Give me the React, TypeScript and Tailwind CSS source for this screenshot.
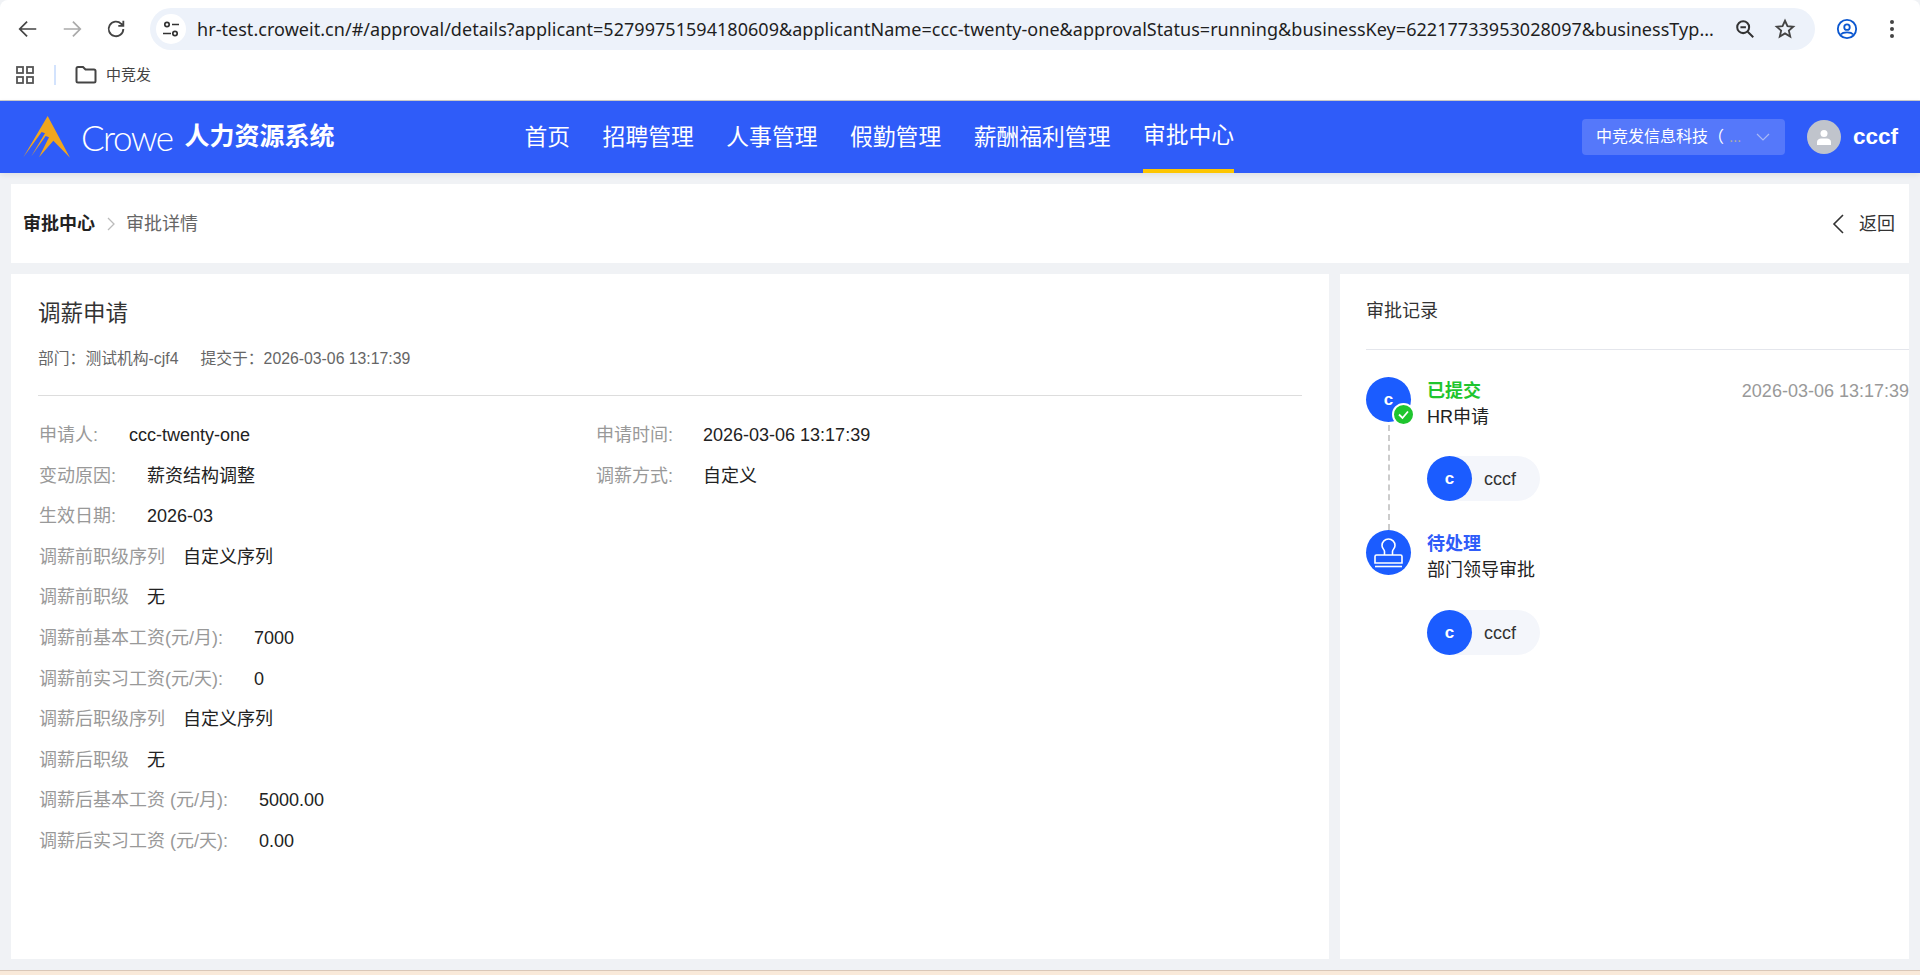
import React from "react";

const FONT = "font-['Liberation_Sans','Noto_Sans_CJK_SC',sans-serif]";

function Logo() {
  return (
    <svg width="70" height="55" viewBox="0 0 210 165" className="shrink-0">
      <path d="M98 18 L165 143 L115 92 L72 142 L102 82 L92 78 L48 140 L90 70 L80 66 L25 142 Z" fill="#f0a61e" />
    </svg>
  );
}

function Row({ label, value, gap = 18 }: { label: string; value: string; gap?: number }) {
  return (
    <div className="flex h-[40.55px] items-center text-lg">
      <span className="text-[#999]">{label}</span>
      <span className="text-[#222]" style={{ marginLeft: gap }}>{value}</span>
    </div>
  );
}

function Person() {
  return (
    <div className="flex h-[45px] w-[113px] items-center rounded-full bg-[#f4f6fb]">
      <div className="flex h-[45px] w-[45px] items-center justify-center rounded-full bg-[#1b5cff] text-[17px] font-bold text-white">c</div>
      <span className="ml-3 text-lg text-[#333]">cccf</span>
    </div>
  );
}

export default function App() {
  return (
    <div className={`${FONT} flex h-[975px] flex-col overflow-hidden bg-[#f0f2f5]`}>
      <div className="flex h-[50px] shrink-0 items-center rounded-t-lg bg-white pt-[8px]">
        <div className="flex w-[150px] shrink-0 items-center gap-[22px] pl-[17px]">
          <svg width="22" height="22" viewBox="0 0 24 24" fill="none" stroke="#444" strokeWidth="1.900"><path d="M21 12H4M11 4l-8 8 8 8" /></svg>
          <svg width="22" height="22" viewBox="0 0 24 24" fill="none" stroke="#aaa" strokeWidth="1.900"><path d="M3 12h17M13 4l8 8-8 8" /></svg>
          <svg width="22" height="22" viewBox="0 0 24 24" fill="none" stroke="#444" strokeWidth="2"><path d="M20 12a8 8 0 1 1-2.300-5.700L20 8.500M20 3v5.500h-5.500" /></svg>
        </div>
        <div className="flex h-[42px] w-[1665px] items-center rounded-full bg-[#edf2fa] pl-[6px] pr-[19px]">
          <div className="flex h-[30px] w-[30px] shrink-0 items-center justify-center rounded-full bg-white">
            <svg width="20" height="20" viewBox="0 0 20 20" fill="none" stroke="#333" strokeWidth="1.700"><circle cx="6" cy="5.500" r="2.200" /><path d="M11 5.500h7M2 14.500h8" /><circle cx="14" cy="14.500" r="2.200" /></svg>
          </div>
          <div className="ml-[11px] whitespace-nowrap text-lg tracking-[0.04px] text-[#1f1f1f] font-['Noto_Sans','Noto_Sans_CJK_SC',sans-serif]">hr-test.croweit.cn/#/approval/details?applicant=52799751594180609&amp;applicantName=ccc-twenty-one&amp;approvalStatus=running&amp;businessKey=62217733953028097&amp;businessTyp...</div>
          <div className="ml-auto flex items-center gap-[18px]">
            <svg width="22" height="22" viewBox="0 0 24 24" fill="none" stroke="#333" strokeWidth="2.200"><circle cx="10" cy="10" r="6.500" /><path d="M7 10h6M15 15l6 6" /></svg>
            <svg width="22" height="22" viewBox="0 0 24 24" fill="none" stroke="#444" strokeWidth="2"><path d="M12 3l2.700 6 6.300.6-4.800 4.200 1.500 6.400L12 16.800l-5.700 3.400 1.500-6.400L3 9.600 9.300 9z" /></svg>
          </div>
        </div>
        <div className="ml-[21px] flex items-center gap-[31px]">
          <svg width="22" height="22" viewBox="0 0 24 24" fill="none" stroke="#0b57d0" strokeWidth="2"><circle cx="12" cy="12" r="10" /><circle cx="12" cy="10" r="3" /><path d="M5.500 18c2-3 11-3 13 0" /></svg>
          <svg width="6" height="20" viewBox="0 0 6 20" fill="#444"><circle cx="3" cy="3" r="2" /><circle cx="3" cy="10" r="2" /><circle cx="3" cy="17" r="2" /></svg>
        </div>
      </div>
      <div className="flex h-[51px] shrink-0 items-center border-b border-[#ccc] bg-white pl-4">
        <svg width="18" height="18" viewBox="0 0 18 18" fill="none" stroke="#555" strokeWidth="1.800"><rect x="1" y="1" width="6" height="6" /><rect x="11" y="1" width="6" height="6" /><rect x="1" y="11" width="6" height="6" /><rect x="11" y="11" width="6" height="6" /></svg>
        <div className="ml-5 h-5 w-0.5 bg-[#d3e3fd]" />
        <svg className="ml-[19px]" width="22" height="20" viewBox="0 0 22 20" fill="none" stroke="#444" strokeWidth="2"><path d="M1.500 3.500a1.500 1.500 0 0 1 1.500-1.500h5l2.500 2.500h8.500a1.500 1.500 0 0 1 1.500 1.500v10a1.500 1.500 0 0 1-1.500 1.500H3a1.500 1.500 0 0 1-1.500-1.500z" /></svg>
        <span className="ml-[9px] text-[15px] text-[#444]">中竞发</span>
      </div>
      <header className="flex h-[72px] shrink-0 items-center bg-[#2f5cf9] shadow-[0_2px_6px_rgba(0,0,0,0.08)]">
        <div className="ml-[15px]"><Logo /></div>
        <span className="-ml-[4px] font-['Lato',sans-serif] text-[35px] font-light tracking-[-1.500px] text-white">Crowe</span>
        <span className="ml-[12px] text-[25px] font-bold text-white">人力资源系统</span>
        <nav className="ml-[190px] flex h-full gap-[32.500px] text-[22.800px] text-white">
          {["首页", "招聘管理", "人事管理", "假勤管理", "薪酬福利管理"].map((n) => (
            <div key={n} className="flex items-center">{n}</div>
          ))}
          <div className="flex items-center border-b-4 border-[#fdc500]">审批中心</div>
        </nav>
        <div className="ml-auto mr-[22px] flex h-[36px] w-[203px] items-center rounded bg-[#5578fa] pl-[14px] text-base text-white">
          <span>中竞发信息科技（</span>
          <span className="ml-[5px] text-[#aaa] tracking-tight">...</span>
          <svg className="ml-[15px]" width="14" height="8" viewBox="0 0 14 8" fill="none" stroke="#a9b9f5" strokeWidth="1.200"><path d="M1 1l6 6 6-6" /></svg>
        </div>
        <div className="flex h-[34px] w-[34px] items-center justify-center rounded-full bg-[#c0c4cc]">
          <svg width="16" height="16" viewBox="0 0 16 16" fill="#fff"><circle cx="8" cy="4.500" r="3.500" /><path d="M1 16v-3c0-2 2-3.500 4-3.500h6c2 0 4 1.500 4 3.500v3z" /></svg>
        </div>
        <span className="ml-[12px] mr-[22px] text-[22.500px] font-bold text-white">cccf</span>
      </header>
      <main className="flex min-h-0 flex-1 flex-col gap-[11px] p-[11px]">
        <div className="flex h-[79px] shrink-0 items-center bg-white pl-[12px] pr-[14px] text-lg">
          <span className="font-bold text-[#222]">审批中心</span>
          <svg className="ml-[12px]" width="8" height="14" viewBox="0 0 8 14" fill="none" stroke="#bbb" strokeWidth="1.300"><path d="M1 1l6 6-6 6" /></svg>
          <span className="ml-[11px] text-[#666]">审批详情</span>
          <svg className="ml-auto" width="12" height="20" viewBox="0 0 12 20" fill="none" stroke="#333" strokeWidth="1.600"><path d="M11 1L2 10l9 9" /></svg>
          <span className="ml-[15px] text-[#333]">返回</span>
        </div>
        <div className="flex min-h-0 flex-1 gap-[11px]">
          <section className="w-[1318px] bg-white px-[27px] pt-[25px]">
            <h1 className="text-[22.500px] leading-[30px] text-[#333]">调薪申请</h1>
            <div className="mt-[20px] flex text-[15.800px] leading-5 text-[#666]">
              <span>部门：测试机构-cjf4</span>
              <span className="ml-[22px]">提交于：2026-03-06 13:17:39</span>
            </div>
            <div className="mt-[26px] h-px bg-[#ddd]" />
            <div className="mt-[19px] pl-[1px]">
              <div className="flex">
                <div className="w-[557px]"><Row label="申请人:" value="ccc-twenty-one" gap={31} /></div>
                <Row label="申请时间:" value="2026-03-06 13:17:39" gap={30} />
              </div>
              <div className="flex">
                <div className="w-[557px]"><Row label="变动原因:" value="薪资结构调整" gap={31} /></div>
                <Row label="调薪方式:" value="自定义" gap={30} />
              </div>
              <Row label="生效日期:" value="2026-03" gap={31} />
              <Row label="调薪前职级序列" value="自定义序列" />
              <Row label="调薪前职级" value="无" />
              <Row label="调薪前基本工资(元/月):" value="7000" gap={31} />
              <Row label="调薪前实习工资(元/天):" value="0" gap={31} />
              <Row label="调薪后职级序列" value="自定义序列" />
              <Row label="调薪后职级" value="无" />
              <Row label="调薪后基本工资 (元/月):" value="5000.00" gap={31} />
              <Row label="调薪后实习工资 (元/天):" value="0.00" gap={31} />
            </div>
          </section>
          <aside className="flex-1 bg-white pl-[26px]">
            <div className="flex h-[76px] items-center border-b border-[#e4e6ec] pb-[2px] text-lg text-[#333]">审批记录</div>
            <div className="mt-[27px] flex h-[153px]">
              <div className="flex w-[45px] shrink-0 flex-col items-center">
                <div className="relative flex h-[45px] w-[45px] shrink-0 items-center justify-center rounded-full bg-[#1b5cff] text-[17px] font-bold text-white">
                  c
                  <div className="absolute -right-[4px] -bottom-[4px] flex h-[23px] w-[23px] items-center justify-center rounded-full border-2 border-white bg-[#1fc52e]">
                    <svg width="13" height="11" viewBox="0 0 13 11" fill="none" stroke="#fff" strokeWidth="1.800"><path d="M2 5.500l3.500 3.500L11 2.500" /></svg>
                  </div>
                </div>
                <div className="mt-[3px] flex-1 border-l-2 border-dashed border-[#ccc]" />
              </div>
              <div className="ml-[16px] flex-1">
                <div className="mt-[1px] flex justify-between text-lg leading-[26px]">
                  <span className="font-bold text-[#1fc52e]">已提交</span>
                  <span className="text-[#999]">2026-03-06 13:17:39</span>
                </div>
                <div className="text-lg leading-[26px] text-[#222]">HR申请</div>
                <div className="mt-[26px]"><Person /></div>
              </div>
            </div>
            <div className="flex h-[153px]">
              <div className="flex h-[45px] w-[45px] shrink-0 items-center justify-center rounded-full bg-[#1b5cff]">
                <svg width="45" height="45" viewBox="0 0 45 45" fill="none" stroke="#fff" strokeWidth="1.600">
                  <path d="M18.500 25v-3.500c0-2-2.500-3-2.500-6a6.500 6.500 0 0 1 13 0c0 3-2.500 4-2.500 6V25" />
                  <path d="M9 33v-6.500a1.500 1.500 0 0 1 1.500-1.500h24a1.500 1.500 0 0 1 1.500 1.500V33z" />
                  <path d="M9 36.500h27" />
                </svg>
              </div>
              <div className="ml-[16px] flex-1">
                <div className="mt-[1px] text-lg font-bold leading-[26px] text-[#2f5cf9]">待处理</div>
                <div className="text-lg leading-[26px] text-[#222]">部门领导审批</div>
                <div className="mt-[27px]"><Person /></div>
              </div>
            </div>
          </aside>
        </div>
      </main>
      <div className="h-[5px] shrink-0 border-t border-[#d9c7b8] bg-[#f9e9d9]" />
    </div>
  );
}
